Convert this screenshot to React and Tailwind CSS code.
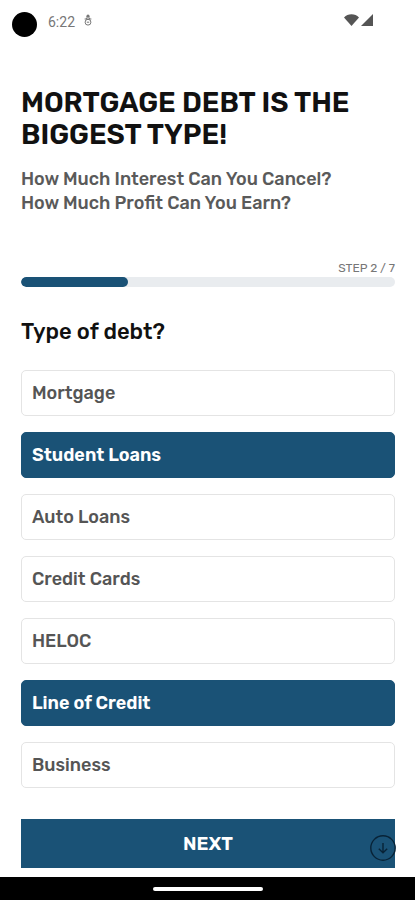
import { useState } from "react"
import clsx from "clsx"

const debtTypes = ["Mortgage", "Student Loans", "Auto Loans", "Credit Cards", "HELOC", "Line of Credit", "Business"]

const StatusBar = () => (
  <div className="flex h-10 items-center justify-between pl-3 pr-[42px] text-[#777]">
    <div className="flex items-center">
      <span className="mt-2 size-[25px] rounded-full bg-black" />
      <span className="ml-[11px] mt-1 font-[Roboto,sans-serif] text-sm leading-5">6:22</span>
      <svg viewBox="0 0 10 12" className="ml-2 h-3 w-[10px]" fill="none" stroke="currentColor">
        <circle cx="5" cy="2.2" r="1.6" fill="currentColor" stroke="none" />
        <path d="M1.6 5h6.8M3.4 3.6v1.6M6.6 3.6v1.6" />
        <circle cx="5" cy="8.2" r="2.9" />
        <path d="M3.8 8.2h2.4" />
      </svg>
    </div>
    <div className="flex items-center gap-[2px] text-[#555]">
      <svg viewBox="0 0 15 12" className="h-3 w-[15px]" fill="currentColor">
        <path d="M7.5 12 0 3.4C2 1.3 4.6.2 7.5.2S13 1.3 15 3.4z" />
      </svg>
      <svg viewBox="0 0 12 12" className="size-3" fill="currentColor">
        <path d="M12 0v12H0z" />
      </svg>
    </div>
  </div>
)

const DebtOption = ({ label, selected, onToggle }) => (
  <button
    type="button"
    aria-pressed={selected}
    onClick={onToggle}
    className={clsx(
      "h-[46px] w-full rounded-[5px] border px-[10px] text-left text-lg leading-6",
      selected ? "border-[#1a5276] bg-[#1a5276] font-semibold text-white" : "border-[#e4e4e4] bg-white font-medium text-[#555]"
    )}
  >
    {label}
  </button>
)

const App = () => {
  const [selected, setSelected] = useState(["Student Loans", "Line of Credit"])
  const step = 2
  const totalSteps = 7

  const toggle = (type) => {
    setSelected((prev) => (prev.includes(type) ? prev.filter((t) => t !== type) : [...prev, type]))
  }

  return (
    <div className="flex min-h-screen flex-col bg-white font-['Rubik','Roboto',sans-serif]">
      <StatusBar />

      <main className="flex-1 pl-[21px] pr-5 pt-[47px] pb-[9px]">
        <h1 className="text-[28px] leading-8 font-semibold text-[#111]">
          MORTGAGE DEBT IS THE
          <br />
          BIGGEST TYPE!
        </h1>
        <p className="mt-4 text-lg leading-6 font-medium text-[#5a5a5a]">
          How Much Interest Can You Cancel?
          <br />
          How Much Profit Can You Earn?
        </p>

        <div className="mt-[45px] text-right text-xs leading-4 text-[#777]">
          STEP {step} / {totalSteps}
        </div>
        <div
          role="progressbar"
          aria-label="Progress"
          aria-valuenow={step}
          aria-valuemax={totalSteps}
          className="mt-[1px] h-[10px] overflow-hidden rounded-[5px] bg-[#e9ecef]"
        >
          <div className="h-full rounded-[5px] bg-[#1a5276]" style={{ width: `${(step / totalSteps) * 100}%` }} />
        </div>

        <h2 className="mt-[33px] text-[22px] leading-6 font-medium text-[#111]">Type of debt?</h2>

        <div className="mt-[26px] flex flex-col gap-4">
          {debtTypes.map((type) => (
            <DebtOption key={type} label={type} selected={selected.includes(type)} onToggle={() => toggle(type)} />
          ))}
        </div>

        <div className="relative mt-[31px]">
          <button type="button" className="block h-[49px] w-full bg-[#1a5276] pt-[2px] text-[19px] font-semibold text-white">
            NEXT
          </button>
          <button type="button" aria-label="Scroll down" className="absolute -right-px bottom-[7px] size-[26px] text-[#082337]">
            <svg viewBox="0 0 26 26" fill="none" stroke="currentColor" strokeWidth="1.4" className="size-full">
              <circle cx="13" cy="13" r="12.2" />
              <path d="M13 8v9.5M8.8 13.7l4.2 4 4.2-4" />
            </svg>
          </button>
        </div>
      </main>

      <div className="flex h-[23px] items-center justify-center bg-black">
        <div className="h-1 w-[110px] rounded-full bg-white" />
      </div>
    </div>
  )
}

export default App
